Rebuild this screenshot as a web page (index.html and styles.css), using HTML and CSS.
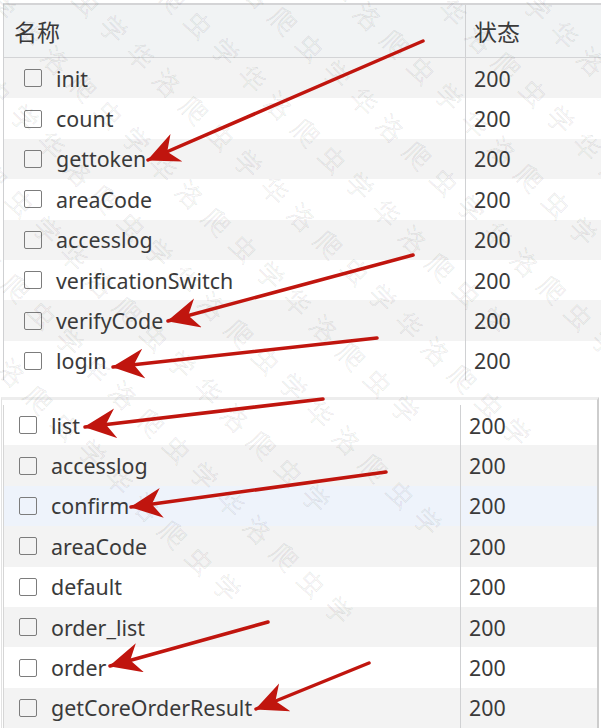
FILE: index.html
```html
<!DOCTYPE html>
<html lang="zh">
<head>
<meta charset="utf-8">
<title>Network</title>
<link rel="stylesheet" href="styles.css">
</head>
<body>
<div class="page">
  <section class="panel panel-top">
    <div class="head">
      <div class="c-name">名称</div>
      <div class="c-status">状态</div>
    </div>
    <div class="rows">
      <div class="row alt"><div class="c-name"><span class="cb"></span>init</div><div class="c-status">200</div></div>
      <div class="row"><div class="c-name"><span class="cb"></span>count</div><div class="c-status">200</div></div>
      <div class="row alt"><div class="c-name"><span class="cb"></span>gettoken</div><div class="c-status">200</div></div>
      <div class="row"><div class="c-name"><span class="cb"></span>areaCode</div><div class="c-status">200</div></div>
      <div class="row alt"><div class="c-name"><span class="cb"></span>accesslog</div><div class="c-status">200</div></div>
      <div class="row"><div class="c-name"><span class="cb"></span>verificationSwitch</div><div class="c-status">200</div></div>
      <div class="row alt"><div class="c-name"><span class="cb"></span>verifyCode</div><div class="c-status">200</div></div>
      <div class="row"><div class="c-name"><span class="cb"></span>login</div><div class="c-status">200</div></div>
    </div>
  </section>

  <section class="panel panel-bottom">
    <div class="rows">
      <div class="row"><div class="c-name"><span class="cb"></span>list</div><div class="c-status">200</div></div>
      <div class="row alt"><div class="c-name"><span class="cb"></span>accesslog</div><div class="c-status">200</div></div>
      <div class="row hover"><div class="c-name"><span class="cb"></span>confirm</div><div class="c-status">200</div></div>
      <div class="row alt"><div class="c-name"><span class="cb"></span>areaCode</div><div class="c-status">200</div></div>
      <div class="row"><div class="c-name"><span class="cb"></span>default</div><div class="c-status">200</div></div>
      <div class="row alt"><div class="c-name"><span class="cb"></span>order_list</div><div class="c-status">200</div></div>
      <div class="row"><div class="c-name"><span class="cb"></span>order</div><div class="c-status">200</div></div>
      <div class="row alt"><div class="c-name"><span class="cb"></span>getCoreOrderResult</div><div class="c-status">200</div></div>
    </div>
  </section>

  <div class="watermark" aria-hidden="true">
    <div class="wm-inner">
      <div class="wm-line">华洛爬虫学华洛爬虫学华洛爬虫学华洛爬虫学华洛爬虫学华洛爬虫学</div>
      <div class="wm-line">华洛爬虫学华洛爬虫学华洛爬虫学华洛爬虫学华洛爬虫学华洛爬虫学</div>
      <div class="wm-line">华洛爬虫学华洛爬虫学华洛爬虫学华洛爬虫学华洛爬虫学华洛爬虫学</div>
      <div class="wm-line">华洛爬虫学华洛爬虫学华洛爬虫学华洛爬虫学华洛爬虫学华洛爬虫学</div>
      <div class="wm-line">华洛爬虫学华洛爬虫学华洛爬虫学华洛爬虫学华洛爬虫学华洛爬虫学</div>
      <div class="wm-line">华洛爬虫学华洛爬虫学华洛爬虫学华洛爬虫学华洛爬虫学华洛爬虫学</div>
      <div class="wm-line">华洛爬虫学华洛爬虫学华洛爬虫学华洛爬虫学华洛爬虫学华洛爬虫学</div>
      <div class="wm-line">华洛爬虫学华洛爬虫学华洛爬虫学华洛爬虫学华洛爬虫学华洛爬虫学</div>
      <div class="wm-line">华洛爬虫学华洛爬虫学华洛爬虫学华洛爬虫学华洛爬虫学华洛爬虫学</div>
      <div class="wm-line">华洛爬虫学华洛爬虫学华洛爬虫学华洛爬虫学华洛爬虫学华洛爬虫学</div>
      <div class="wm-line">华洛爬虫学华洛爬虫学华洛爬虫学华洛爬虫学华洛爬虫学华洛爬虫学</div>
      <div class="wm-line">华洛爬虫学华洛爬虫学华洛爬虫学华洛爬虫学华洛爬虫学华洛爬虫学</div>
      <div class="wm-line">华洛爬虫学华洛爬虫学华洛爬虫学华洛爬虫学华洛爬虫学华洛爬虫学</div>
      <div class="wm-line">华洛爬虫学华洛爬虫学华洛爬虫学华洛爬虫学华洛爬虫学华洛爬虫学</div>
      <div class="wm-line">华洛爬虫学华洛爬虫学华洛爬虫学华洛爬虫学华洛爬虫学华洛爬虫学</div>
      <div class="wm-line">华洛爬虫学华洛爬虫学华洛爬虫学华洛爬虫学华洛爬虫学华洛爬虫学</div>
    </div>
  </div>

  <svg class="arrows" width="601" height="728" viewBox="0 0 601 728" aria-hidden="true">
    <defs>
      <marker id="head" markerUnits="userSpaceOnUse" markerWidth="34" markerHeight="32" refX="31" refY="15" orient="auto">
        <path d="M32 15 L0 0 L10 15 L0 30 Z" fill="#c0150e"/>
      </marker>
    </defs>
    <g stroke="#c0150e" stroke-width="3.5" stroke-linecap="round" fill="none" marker-end="url(#head)">
      <line x1="423" y1="41" x2="148" y2="160"/>
      <line x1="413" y1="255" x2="168" y2="321"/>
      <line x1="377" y1="338" x2="113" y2="367"/>
      <line x1="323" y1="399" x2="85" y2="427"/>
      <line x1="386" y1="472" x2="131" y2="507"/>
      <line x1="268" y1="622" x2="110" y2="666"/>
      <line x1="369" y1="663" x2="256" y2="709"/>
    </g>
  </svg>
</div>
</body>
</html>
```

FILE: styles.css
```css
* { box-sizing: border-box; }

html, body {
  margin: 0;
  padding: 0;
  background: #ffffff;
}

.page {
  position: relative;
  width: 601px;
  height: 728px;
  overflow: hidden;
  font-family: "Noto Sans", "Noto Sans CJK SC", sans-serif;
  font-size: 21.4px;
  color: #3a3a3a;
}

.panel {
  overflow: hidden;
}

.panel-top {
  margin-top: 3px;
  margin-left: 3px;
  height: 377px;
  border-top: 2px solid #d4d4d6;
  border-left: 1px solid #cfd0d2;
}

.panel-bottom {
  margin-top: 17px;
  margin-left: 1px;
  width: 598px;
  height: 331px;
  border-top: 3px solid #ededed;
  border-left: 1px solid #e2e2e2;
  border-right: 2px solid #cdcdcd;
  padding-top: 5px;
  padding-left: 1px;
}

.panel-bottom .rows {
  border-left: 1px solid #d6d6d6;
}

.head {
  display: flex;
  height: 53px;
  background: #f1f3f4;
  border-bottom: 1px solid #d3d4d6;
}

.head .c-name {
  padding-left: 10px;
  font-size: 23px;
}

.head .c-status {
  font-size: 23px;
}

.row {
  display: flex;
  height: 40.4px;
  background: #ffffff;
}

.row.alt {
  background: #f3f3f3;
}

.row.hover {
  background: #eef3fb;
}

.c-name {
  display: flex;
  align-items: center;
  width: 462px;
  flex: none;
  border-right: 1px solid #d0d1d3;
  padding-left: 20px;
  white-space: nowrap;
}

.c-status {
  display: flex;
  align-items: center;
  padding-left: 8px;
  flex: 1;
}

.panel-bottom .c-name {
  width: 457px;
  padding-left: 15px;
}

.cb {
  width: 18px;
  height: 18px;
  border: 1.6px solid #7c7c7c;
  border-radius: 2px;
  margin-right: 14px;
  flex: none;
  background: transparent;
}

.watermark {
  position: absolute;
  inset: 0;
  pointer-events: none;
  overflow: hidden;
}

.wm-inner {
  position: absolute;
  left: -350px;
  top: -500px;
  width: 1300px;
  display: flex;
  flex-direction: column;
  gap: 26px;
  transform: rotate(45deg);
  transform-origin: center center;
}

.wm-line {
  font-family: "Noto Sans CJK SC", sans-serif;
  font-size: 26px;
  font-weight: 300;
  letter-spacing: 12px;
  white-space: nowrap;
  color: transparent;
  -webkit-text-stroke: 0.6px rgba(0, 0, 0, 0.11);
}

.wm-line:nth-child(even) {
  margin-left: -95px;
}

.arrows {
  position: absolute;
  left: 0;
  top: 0;
  pointer-events: none;
}
```
